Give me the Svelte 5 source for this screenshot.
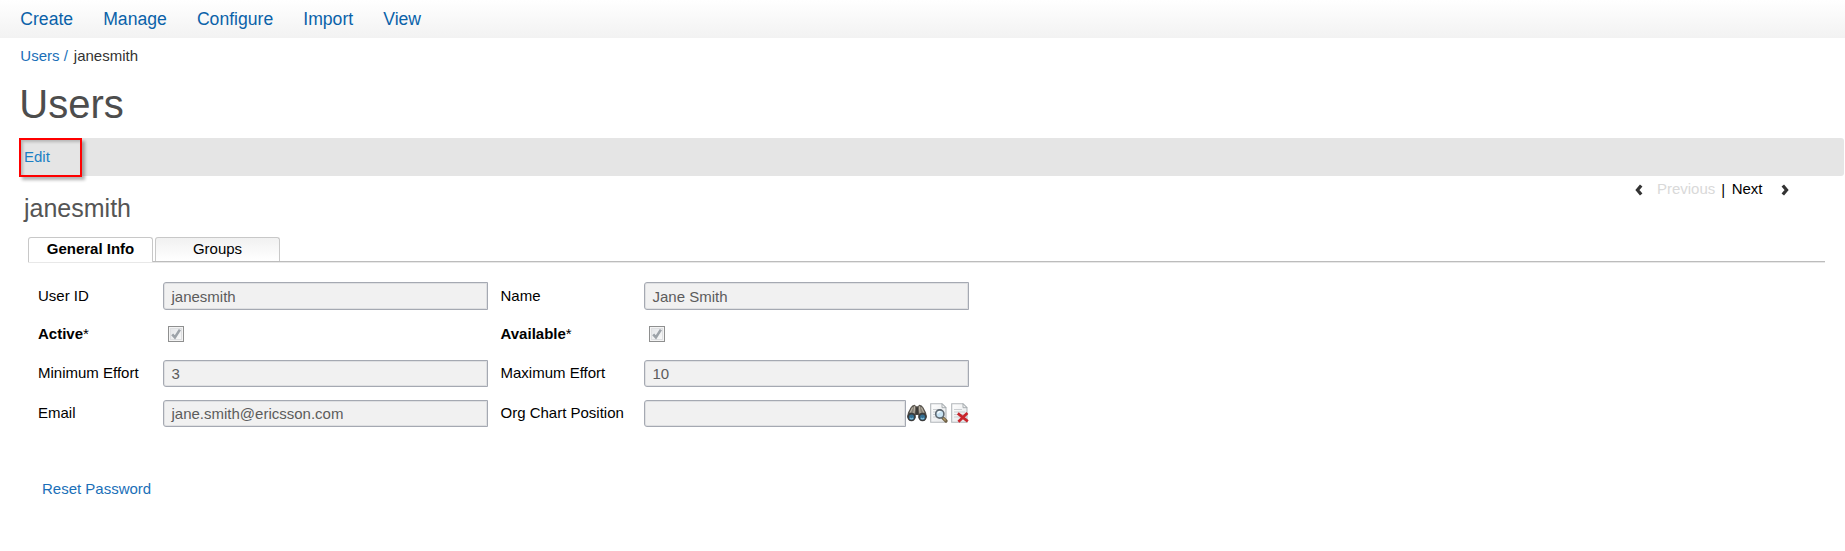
<script>
  const menu = ['Create', 'Manage', 'Configure', 'Import', 'View'];
  const tabs = ['General Info', 'Groups'];
  let active = $state(0);
  const fields = [
    { label: 'User ID', value: 'janesmith' },
    { label: 'Name', value: 'Jane Smith' },
    { label: 'Active', check: true },
    { label: 'Available', check: true },
    { label: 'Minimum Effort', value: '3' },
    { label: 'Maximum Effort', value: '10' },
    { label: 'Email', value: 'jane.smith@ericsson.com' },
    { label: 'Org Chart Position', value: '', lookup: true },
  ];
</script>

{#snippet page()}
  <path d="M.7.7h11.3l4 4v14.6H.7z" fill="url(#paper)" stroke="#b2b7ba" stroke-width="1.1" />
  <path d="M12 .7v4h4z" fill="#eef0f1" stroke="#a2a7aa" stroke-width=".9" />
  <path d="M3 6.5h8M3 9h11M3 11.5h10M3 14h9" stroke="#cbced1" stroke-width="1" />
{/snippet}

<nav>
  {#each menu as item}<span>{item}</span>{/each}
</nav>

<main>
  <div class="crumbs"><span class="link">Users /</span><span>janesmith</span></div>
  <h1>Users</h1>
  <div class="toolbar"><div class="edit">Edit</div></div>

  <header>
    <h2>janesmith</h2>
    <div class="pager">
      <svg width="8" height="12" viewBox="0 0 8 12"><path d="M6.2 1.4 2.4 6l3.8 4.6" fill="none" stroke="#333" stroke-width="3.2" /></svg>
      <span class="prev">Previous</span>
      <span class="bar">|</span>
      <span class="next">Next</span>
      <svg width="8" height="12" viewBox="0 0 8 12"><path d="m1.8 1.4 3.8 4.6-3.8 4.6" fill="none" stroke="#333" stroke-width="3.2" /></svg>
    </div>
  </header>

  <div class="tabs">
    {#each tabs as tab, i}
      <button class:active={active === i} onclick={() => (active = i)}>{tab}</button>
    {/each}
  </div>

  <section class="form">
    {#each fields as f}
      <div class="label" class:required={f.check}>{f.label}{#if f.check}<span>*</span>{/if}</div>
      {#if f.check}
        <svg class="check" width="16" height="16" viewBox="0 0 16 16">
          <rect x=".5" y=".5" width="15" height="15" fill="#f4f4f4" stroke="#8e8f8f" />
          <rect x="2.5" y="2.5" width="11" height="11" fill="url(#box)" stroke="#dedfe1" />
          <path d="m4.2 8.3 2.7 3.1 5-7.8" fill="none" stroke="#9da3a9" stroke-width="2.6" />
        </svg>
      {:else}
        <div class="control">
          <div class="input">{f.value}</div>
          {#if f.lookup}
            <svg class="binoculars" width="20" height="18" viewBox="0 0 20 18">
              <path d="M3.6 3.4Q5 1 7.8.8L9 2.2h2L12.2.8Q15 1 16.4 3.4L19 8.4l.9 4.4-2.1 3.7h-4l-2.4-3V11H8.6v2.5l-2.4 3h-4L.1 12.8 1 8.4z" fill="#55514b" />
              <path d="M4.6 3.6 8 1.8l.8 3-1 5.2-5.4-1.2zM15.4 3.6 12 1.8l-.8 3 1 5.2 5.4-1.2z" fill="#857f74" />
              <path d="m5.6 3.6-2.4 5M14.4 3.6l2.4 5M7.7 2.3 6.9 9M12.3 2.3l.8 6.7" stroke="#bdb6a9" stroke-width="1" />
              <path d="M8.8 3.5h2.4v7H8.8z" fill="#3d3b38" />
              <circle cx="4.5" cy="13" r="4.2" fill="#3b3c3d" />
              <circle cx="15.5" cy="13" r="4.2" fill="#3b3c3d" />
              <circle cx="4.5" cy="13.2" r="2.6" fill="#346e91" />
              <circle cx="15.5" cy="13.2" r="2.6" fill="#346e91" />
              <path d="M2.9 14q1.6 1.8 3.2 0M13.9 14q1.6 1.8 3.2 0" fill="none" stroke="#83bdd8" stroke-width="1.2" />
            </svg>
            <svg class="view" width="18" height="20" viewBox="0 0 18 20">
              {@render page()}
              <path d="m12.6 14.6 3.4 3.4" stroke="#6f6045" stroke-width="3.2" stroke-linecap="round" />
              <path d="m13.2 15 2.4 2.4" stroke="#b19a68" stroke-width="1.4" />
              <circle cx="9.8" cy="11" r="4.1" fill="#c8e3f3" stroke="#5f6972" stroke-width="1.6" />
              <path d="M7.6 10.4q.9-2 2.8-1.7" fill="none" stroke="#fff" stroke-width="1.2" />
            </svg>
            <svg class="clear" width="18" height="20" viewBox="0 0 18 20">
              {@render page()}
              <path d="m6.8 10.4 10 8M16.4 10 7.4 18.8" stroke="#c9252c" stroke-width="2.7" />
            </svg>
          {/if}
        </div>
      {/if}
    {/each}
  </section>

  <div class="reset link">Reset Password</div>
</main>

<svg class="defs" width="0" height="0">
  <defs>
    <linearGradient id="paper" x2="1" y2="1"><stop stop-color="#fff" /><stop offset="1" stop-color="#e4e6e8" /></linearGradient>
    <linearGradient id="box" x2="1" y2="1"><stop stop-color="#e3e5e8" /><stop offset="1" stop-color="#fafafa" /></linearGradient>
  </defs>
</svg>

<style>
  :global(body) {
    background: #fff;
    color: #000;
    font: 15px/20px "Liberation Sans", Arial, sans-serif;
  }
  svg { display: block; flex: none; }
  .defs { position: absolute; }
  nav {
    display: flex;
    gap: 30.1px;
    box-sizing: border-box;
    height: 38px;
    padding: 8px 20.3px;
    background: linear-gradient(#fff, #f2f2f2);
    color: #0a62a9;
    font-size: 17.6px;
    line-height: 22px;
  }
  .link { color: #1a6fb8; }
  .crumbs {
    display: flex;
    gap: 6px;
    padding: 8px 20.3px 0;
    color: #333;
  }
  h1 {
    margin: 14px 0 0 19.3px;
    color: #4d4d4d;
    font-size: 40px;
    font-weight: 400;
    line-height: 48px;
  }
  .toolbar {
    height: 38px;
    margin: 10px 1px 0 19px;
    border-radius: 3px;
    background: #e5e5e5;
  }
  .edit {
    box-sizing: border-box;
    width: 63px;
    height: 39px;
    padding: 7px 3px;
    border: 2px solid #f00;
    box-shadow: 3px 3px 3px rgba(0, 0, 0, .3), inset 2px 2px 3px rgba(0, 0, 0, .2);
    color: #1b7fc4;
    line-height: 20px;
  }
  header {
    display: flex;
    justify-content: space-between;
    height: 61px;
    padding: 0 56px 0 24px;
  }
  h2 {
    margin: 17px 0 0;
    color: #555;
    font-size: 25px;
    font-weight: 400;
    line-height: 30px;
  }
  .pager {
    display: flex;
    align-items: center;
    height: 20px;
    padding-top: 3px;
  }
  .pager svg { margin-top: 2px; }
  .prev { margin-left: 13.5px; color: #d9d9d9; }
  .bar { margin: 1px 6.5px 0 6px; }
  .next { margin-right: 18.5px; }
  .tabs {
    display: flex;
    gap: 3px;
    height: 24px;
    margin: 0 20px 0 28px;
    border-bottom: 1px solid #bcbcbc;
    box-shadow: 0 1px #e8e8e8;
  }
  button {
    box-sizing: border-box;
    width: 125px;
    height: 24px;
    padding: 0 0 2px;
    border: 1px solid #c8c8c8;
    border-bottom: 0;
    border-radius: 3px 3px 0 0;
    background: linear-gradient(#f1f1f1, #fff);
    font: 15px/20px "Liberation Sans", Arial, sans-serif;
    color: #000;
  }
  button + button { width: 125px; margin-left: -1px; }
  button.active {
    height: 25px;
    padding-bottom: 3px;
    background: #fff;
    font-weight: 700;
  }
  .form {
    display: grid;
    grid-template-columns: 125px 337.5px 143.5px 327px;
    grid-template-rows: 28px 50px 40px 27px;
    padding: 20px 0 0 38px;
  }
  .label { padding-top: 4px; }
  .label:nth-child(n + 9) { padding-top: 3px; }
  .label.required { padding-top: 14px; font-weight: 700; }
  .required span { font-weight: 400; }
  .check { margin: 16px 0 0 5px; }
  .control { display: flex; width: 325px; height: 27px; }
  .control:nth-child(-n + 4) { height: 28px; }
  .input {
    flex: 1;
    box-sizing: border-box;
    height: 100%;
    padding: 4px 7.5px 0;
    border: 1px solid #a5a9b2;
    border-radius: 3px 0 0 3px;
    box-shadow: inset 0 0 0 1px #dfe0e2;
    background: #f1f1f1;
    color: #5c5c5c;
    line-height: 20px;
  }
  .control:nth-child(n + 9) .input { padding-top: 3px; }
  .binoculars { margin: 4px 2px 0 1px; }
  .view { margin: 3px 3px 0 1px; }
  .clear { margin-top: 3px; }
  .reset { margin: 52px 0 0 42px; }
</style>
